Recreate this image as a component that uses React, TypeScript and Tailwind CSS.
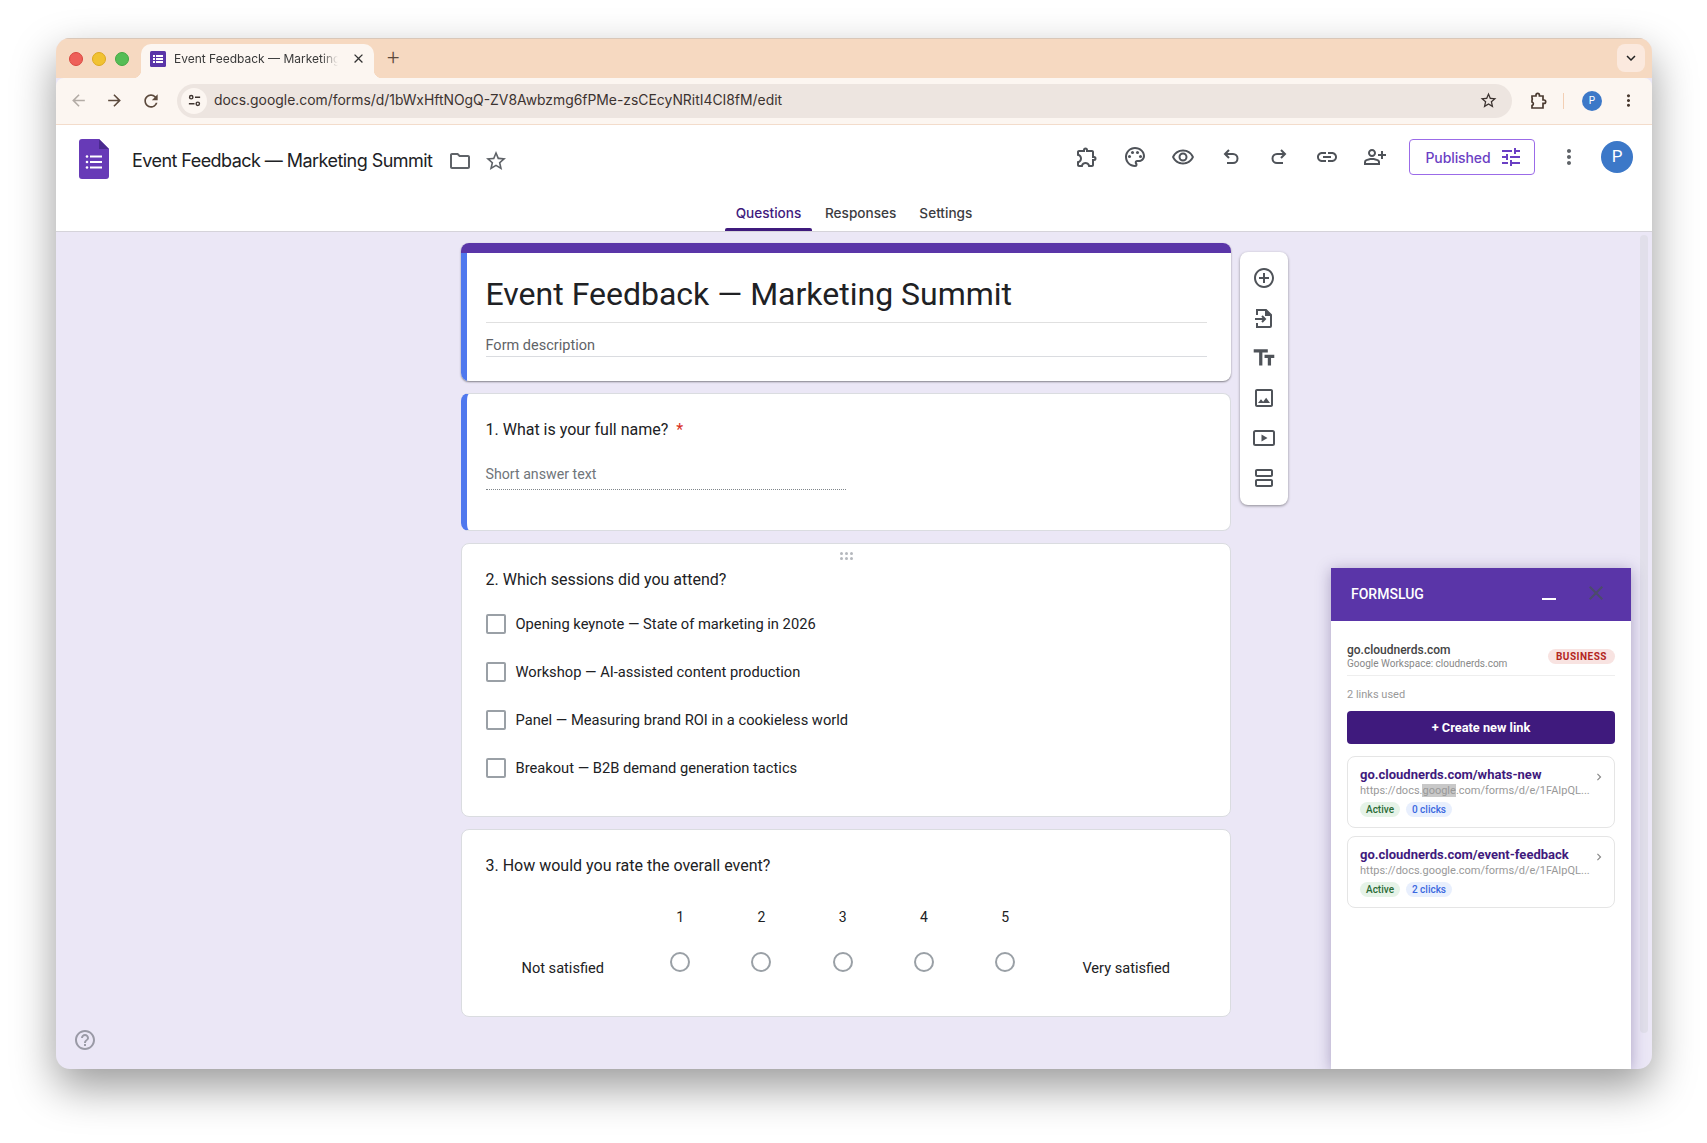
import {
  MdAddCircleOutline,
  MdArrowBack,
  MdArrowForward,
  MdChevronRight,
  MdClose,
  MdExpandMore,
  MdHelpOutline,
  MdLink,
  MdMoreVert,
  MdOutlineExtension,
  MdOutlineFolder,
  MdOutlineImage,
  MdOutlinePalette,
  MdOutlinePersonAddAlt,
  MdOutlineRemoveRedEye,
  MdOutlineViewAgenda,
  MdRefresh,
  MdStarBorder,
  MdTextFields,
  MdTune,
} from "react-icons/md";

const sessions = [
  "Opening keynote — State of marketing in 2026",
  "Workshop — AI-assisted content production",
  "Panel — Measuring brand ROI in a cookieless world",
  "Breakout — B2B demand generation tactics",
];

const links = [
  { slug: "go.cloudnerds.com/whats-new", clicks: "0 clicks", mark: true },
  { slug: "go.cloudnerds.com/event-feedback", clicks: "2 clicks", mark: false },
];

const FormsGlyph = ({ className }: { className: string }) => (
  <svg viewBox="0 0 30 40" className={className}>
    <path d="M3 0h17l10 10v27a3 3 0 0 1-3 3H3a3 3 0 0 1-3-3V3a3 3 0 0 1 3-3z" fill="#673ab7" />
    <path d="M20 0l10 10H20z" fill="#4a2a8f" />
    <g fill="#fff">
      <circle cx="8" cy="17.5" r="1.3" />
      <circle cx="8" cy="23" r="1.3" />
      <circle cx="8" cy="28.5" r="1.3" />
      <rect x="11" y="16.5" width="12" height="2" />
      <rect x="11" y="22" width="12" height="2" />
      <rect x="11" y="27.5" width="12" height="2" />
    </g>
  </svg>
);

const TabFavicon = () => (
  <svg viewBox="0 0 16 16" className="w-[16px] h-[16px] shrink-0">
    <rect width="16" height="16" rx="1.5" fill="#5a35a8" />
    <g fill="#fff">
      <rect x="3" y="4" width="2" height="2" />
      <rect x="3" y="7" width="2" height="2" />
      <rect x="3" y="10" width="2" height="2" />
      <rect x="6" y="4" width="7" height="2" />
      <rect x="6" y="7" width="7" height="2" />
      <rect x="6" y="10" width="7" height="2" />
    </g>
  </svg>
);

const ImportIcon = () => (
  <svg viewBox="0 0 24 24" className="w-6 h-6" fill="none" stroke="#4f5359" strokeWidth="2">
    <path d="M5 9V4h9l5 5v11a1 1 0 0 1-1 1H5v-4" />
    <path d="M14 4v5h5" fill="#4f5359" />
    <path d="M3 13h10M10 10l3 3-3 3" />
  </svg>
);

const VideoIcon = () => (
  <svg viewBox="0 0 24 24" className="w-6 h-6">
    <rect x="2" y="5" width="20" height="14" rx="1.5" fill="none" stroke="#4f5359" strokeWidth="2" />
    <path d="M9.5 8.5v7l6-3.5z" fill="#4f5359" />
  </svg>
);

const UndoIcon = ({ flip }: { flip?: boolean }) => (
  <svg viewBox="0 0 24 24" className={flip ? "w-6 h-6 -scale-x-100" : "w-6 h-6"} fill="none" stroke="currentColor" strokeWidth="2">
    <path d="M10 5L6 9l4 4" />
    <path d="M6 9h8a4.5 4.5 0 0 1 0 9H8" />
  </svg>
);

const ChromePuzzle = () => (
  <svg viewBox="0 0 20 20" className="w-[20px] h-[20px]" fill="none" stroke="#4a3a30" strokeWidth="1.7">
    <path d="M4 5h4V4a1.7 1.7 0 0 1 3.4 0v1h3.6v4h1a1.7 1.7 0 0 1 0 3.4h-1V17H4v-2.5a1.8 1.8 0 0 0 0-3.5V9a1.8 1.8 0 0 0 0-2z" />
  </svg>
);

const HeaderIcon = ({ children }: { children: React.ReactNode }) => (
  <div className="w-12 flex items-center justify-center text-[#4f5359] text-[24px]">{children}</div>
);

const Card = ({ children, className }: { children: React.ReactNode; className: string }) => (
  <div className={"w-[770px] bg-white rounded-[8px] border border-[#dadce0] " + className}>{children}</div>
);

export default function App() {
  return (
    <div className="w-[1707px] h-[1143px] bg-white pt-[38px] pl-[56px] font-['Roboto',sans-serif] overflow-hidden">
      <div className="w-[1596px] h-[1031px] rounded-[14px] overflow-hidden flex flex-col shadow-[0_18px_44px_rgba(0,0,0,0.4)] bg-[#ebe7f6] relative">
        {/* tab strip */}
        <div className="h-[40px] bg-[#f6d9c1] flex items-start shrink-0 border-t border-[#d9c7b8]">
          <div className="flex items-center gap-[9px] pl-[13px] pt-[13px] w-[85px] shrink-0">
            <div className="w-[14px] h-[14px] rounded-full bg-[#ee6059] border border-[#d8473f]" />
            <div className="w-[14px] h-[14px] rounded-full bg-[#f1c232] border border-[#dca81f]" />
            <div className="w-[14px] h-[14px] rounded-full bg-[#55bd55] border border-[#43a843]" />
          </div>
          <div className="relative mt-[5px] h-[34px] w-[233px] bg-[#fcf6f1] rounded-t-[10px] flex items-center pl-[9px] pb-[5px] shrink-0">
            <TabFavicon />
            <span className="ml-[8px] w-[164px] overflow-hidden whitespace-nowrap text-[12px] text-[#3a3a3a] font-['Inter',sans-serif] [mask-image:linear-gradient(90deg,#000_90%,transparent)]">
              Event Feedback — Marketing
            </span>
            <MdClose className="ml-[13px] text-[15px] text-[#333]" />
            <div className="absolute -left-[8px] bottom-0 w-[8px] h-[8px] bg-[radial-gradient(circle_at_0_0,#f6d9c1_8px,#fcf6f1_8.5px)]" />
            <div className="absolute -right-[8px] bottom-0 w-[8px] h-[8px] bg-[radial-gradient(circle_at_100%_0,#f6d9c1_8px,#fcf6f1_8.5px)]" />
          </div>
          <div className="ml-[13px] mt-[8px] text-[22px] leading-[22px] font-light text-[#5c4a3d]">+</div>
          <div className="ml-auto mr-[7px] mt-[5px] w-[28px] h-[28px] rounded-[8px] bg-[#fbe9de] flex items-center justify-center text-[18px] text-[#222]">
            <MdExpandMore />
          </div>
        </div>

        {/* address bar */}
        <div className="h-[47px] bg-[#fcf6f1] flex items-center border-b border-[#f3dccb] shrink-0 pl-[13px] pb-[1px] rounded-t-[8px]">
          <MdArrowBack className="text-[19px] text-[#b3aca6]" />
          <MdArrowForward className="ml-[17px] text-[19px] text-[#5c4a3d]" />
          <MdRefresh className="ml-[17px] text-[20px] text-[#5c4a3d]" />
          <div className="ml-[16px] w-[1335px] h-[34px] rounded-full bg-[#ede5e0] flex items-center pl-[4px] pr-[14px]">
            <div className="w-[26px] h-[26px] rounded-full bg-[#fcf6f1] flex items-center justify-center">
              <svg viewBox="0 0 16 16" className="w-[15px] h-[15px]" fill="none" stroke="#3f3530" strokeWidth="1.5">
                <circle cx="4.5" cy="4.5" r="1.8" />
                <path d="M8.5 4.5H14M2 11.5h6" />
                <circle cx="11.5" cy="11.5" r="1.8" />
              </svg>
            </div>
            <span className="ml-[7px] text-[13.9px] text-[#3c3330] font-['Inter',sans-serif] whitespace-nowrap">
              docs.google.com/forms/d/1bWxHftNOgQ-ZV8Awbzmg6fPMe-zsCEcyNRitI4CI8fM/edit
            </span>
            <MdStarBorder className="ml-auto text-[19px] text-[#3c3330]" />
          </div>
          <div className="ml-[16px]"><ChromePuzzle /></div>
          <div className="ml-[15px] w-px h-[16px] bg-[#f3cfb4]" />
          <div className="ml-[18px] w-[20px] h-[20px] rounded-full bg-[#3c78c8] text-white text-[10px] flex items-center justify-center">P</div>
          <MdMoreVert className="ml-[17px] text-[19px] text-[#4a3a30]" />
        </div>

        {/* forms header */}
        <div className="h-[107px] bg-white border-b border-[#d5d3da] shrink-0 flex flex-col">
          <div className="h-[88px] flex pl-[23px] pr-[19px] pt-[14px]">
            <FormsGlyph className="w-[30px] h-[40px] shrink-0" />
            <span className="ml-[23px] mt-[10px] text-[18px] leading-[24px] text-[#202124] font-['Inter',sans-serif] whitespace-nowrap h-[24px] tracking-[-0.55px]">
              Event Feedback — Marketing Summit
            </span>
            <MdOutlineFolder className="ml-[16px] mt-[10px] text-[24px] text-[#5f6368]" />
            <MdStarBorder className="ml-[12px] mt-[10px] text-[24px] text-[#5f6368]" />
            <div className="ml-auto flex h-[36px] items-center">
              <HeaderIcon><MdOutlineExtension /></HeaderIcon>
              <HeaderIcon><MdOutlinePalette /></HeaderIcon>
              <HeaderIcon><MdOutlineRemoveRedEye /></HeaderIcon>
              <HeaderIcon><UndoIcon /></HeaderIcon>
              <HeaderIcon><UndoIcon flip /></HeaderIcon>
              <HeaderIcon><MdLink /></HeaderIcon>
              <HeaderIcon><MdOutlinePersonAddAlt /></HeaderIcon>
              <div className="ml-[10px] w-[126px] h-[36px] rounded-[4px] border border-[#9b6be8] flex items-center justify-center gap-[8px] pl-[4px] text-[#6b3fc4]">
                <span className="text-[14px] font-medium font-['Inter',sans-serif] tracking-[-0.1px]">Published</span>
                <MdTune className="text-[24px]" />
              </div>
              <MdMoreVert className="ml-[22px] text-[24px] text-[#5f6368]" />
              <div className="ml-[20px] w-[32px] h-[32px] rounded-full bg-[#3c78c8] text-white text-[17px] flex items-center justify-center">P</div>
            </div>
          </div>
          <div className="flex-1 flex pl-[669px] text-[13.6px] font-medium font-['Inter',sans-serif] text-[#3c3c41]">
            <div className="w-[87px] flex flex-col items-center justify-between text-[#3f1a7d]">
              <span className="leading-[18px] -mt-[9px]">Questions</span>
              <div className="w-full h-[3px] bg-[#3f1a7d] rounded-t-[2px]" />
            </div>
            <span className="ml-[13px] leading-[18px] -mt-[9px]">Responses</span>
            <span className="ml-[23px] leading-[18px] -mt-[9px]">Settings</span>
          </div>
        </div>

        {/* form body */}
        <div className="flex-1 relative flex items-start pl-[405px] pt-[11px] gap-[9px] text-[#202124]">
          <div className="flex flex-col gap-[12px]">
            <div className="w-[770px] h-[138px] bg-white rounded-[8px] overflow-hidden shadow-[0_1px_2px_rgba(0,0,0,0.45)] flex flex-col">
              <div className="h-[10px] bg-[#5a35a8] shrink-0" />
              <div className="flex-1 flex">
                <div className="w-[6px] bg-[#4f78ee] shrink-0" />
                <div className="flex-1 pl-[18.5px] pr-[24px] pt-[19px]">
                  <div className="h-[51px] text-[32px] leading-[44px] border-b border-[#e0e0e0]">Event Feedback — Marketing Summit</div>
                  <div className="h-[34px] pt-[12px] text-[14.5px] leading-[22px] text-[#5f6368] border-b border-[#dadce0]">Form description</div>
                </div>
              </div>
            </div>

            <div className="w-[770px] h-[138px] bg-white rounded-[8px] border border-l-[6px] border-[#dadce0] border-l-[#4f78ee] pl-[18.5px] pt-[24px]">
              <div className="text-[16px] leading-[24px]">
                1. What is your full name? <span className="ml-[4px] text-[#d93025]">*</span>
              </div>
              <div className="mt-[22px] w-[360px] h-[26px] text-[14.2px] leading-[20px] text-[#70757a] border-b border-dotted border-[#80868b]">Short answer text</div>
            </div>

            <Card className="relative h-[274px] pl-[23.5px] pt-[24px]">
              <div className="absolute left-[378px] top-[8px] grid grid-cols-3 gap-[2px]">
                {[0, 1, 2, 3, 4, 5].map((d) => (
                  <div key={d} className="w-[3px] h-[3px] rounded-full bg-[#b5b8bd]" />
                ))}
              </div>
              <div className="text-[16px] leading-[24px]">2. Which sessions did you attend?</div>
              <div className="mt-[8px] flex flex-col">
                {sessions.map((s) => (
                  <div key={s} className="h-[48px] flex items-center">
                    <div className="w-[20px] h-[20px] rounded-[2px] border-2 border-[#9aa0a6] shrink-0" />
                    <span className="ml-[10px] text-[14.7px] leading-[22px]">{s}</span>
                  </div>
                ))}
              </div>
            </Card>

            <Card className="h-[188px] pl-[23.5px] pt-[24px]">
              <div className="text-[16px] leading-[24px]">3. How would you rate the overall event?</div>
              <div className="mt-[29px] -ml-[23.5px] grid grid-cols-[177.5px_repeat(5,81.25px)_161px] text-[14px] text-center">
                <div />
                {[1, 2, 3, 4, 5].map((n) => (
                  <div key={n} className="h-[45px]">{n}</div>
                ))}
                <div />
                <div className="pt-[6px] pl-[24px] text-[14.6px]">Not satisfied</div>
                {[1, 2, 3, 4, 5].map((n) => (
                  <div key={n} className="flex justify-center">
                    <div className="w-[20px] h-[20px] rounded-full border-2 border-[#9aa0a6]" />
                  </div>
                ))}
                <div className="pt-[6px] text-[14.6px]">Very satisfied</div>
              </div>
            </Card>
          </div>

          {/* side toolbar */}
          <div className="mt-[9px] w-[48px] h-[253px] bg-white rounded-[8px] shadow-[0_1px_3px_rgba(0,0,0,0.4)] flex flex-col items-center pt-[6px] text-[#4f5359] text-[24px]">
            <div className="h-[40px] flex items-center"><MdAddCircleOutline /></div>
            <div className="h-[40px] flex items-center"><ImportIcon /></div>
            <div className="h-[40px] flex items-center"><MdTextFields className="text-[26px]" /></div>
            <div className="h-[40px] flex items-center"><MdOutlineImage /></div>
            <div className="h-[40px] flex items-center"><VideoIcon /></div>
            <div className="h-[40px] flex items-center"><MdOutlineViewAgenda /></div>
          </div>

          {/* scrollbar */}
          <div className="absolute right-[4px] top-[3px] w-[8px] h-[798px] rounded-full bg-[#e1dfea]" />

          {/* help */}
          <MdHelpOutline className="absolute left-[17px] bottom-[17px] text-[24px] text-[#9a9aa6]" />

          {/* FormSlug panel */}
          <div className="absolute left-[1275px] top-[336px] bottom-0 w-[300px] bg-white shadow-[0_2px_14px_rgba(50,30,100,0.35)]">
            <div className="h-[53px] bg-[#5a35a8] flex items-center pl-[20px] text-white text-[14px] font-medium">
              <span>FORMSLUG</span>
              <div className="ml-[118px] mt-[9px] w-[14px] h-[2px] bg-white" />
              <MdClose className="ml-[28px] -mt-[4px] text-[24px] text-[#4b4b6b]" />
            </div>
            <div className="px-[16px] pt-[22px]">
              <div className="h-[33px] flex items-start justify-between border-b border-[#eeeeee]">
                <div>
                  <div className="text-[12px] leading-[14px] font-medium text-[#444]">go.cloudnerds.com</div>
                  <div className="text-[10px] leading-[13px] text-[#888]">Google Workspace: cloudnerds.com</div>
                </div>
                <div className="h-[15px] w-[67px] mt-[6px] rounded-full bg-[#f8e3e1] text-[#b3261e] text-[10px] leading-[15px] font-bold tracking-[0.5px] text-center">BUSINESS</div>
              </div>
              <div className="mt-[13px] text-[11px] leading-[12px] text-[#999]">2 links used</div>
              <div className="mt-[10px] h-[33px] rounded-[4px] bg-[#3f1a7d] text-white text-[12.8px] font-bold flex items-center justify-center">+ Create new link</div>
              <div className="mt-[12px] flex flex-col gap-[8px]">
                {links.map((l) => (
                  <div key={l.slug} className="relative h-[72px] rounded-[8px] border border-[#e5e5e5] pl-[12px] pt-[10px]">
                    <div className="text-[13px] leading-[16px] font-bold text-[#3f1a7d] whitespace-nowrap">{l.slug}</div>
                    <div className="text-[11px] leading-[15px] text-[#999] whitespace-nowrap">
                      https://docs.{l.mark ? <span className="bg-[#c8c8c8]">google</span> : "google"}.com/forms/d/e/1FAIpQL...
                    </div>
                    <div className="mt-[4px] flex gap-[6px] text-[10px] leading-[15px] font-medium">
                      <span className="w-[40px] text-center rounded-full bg-[#e6f3e8] text-[#2a6b35]">Active</span>
                      <span className="w-[46px] text-center rounded-full bg-[#e8effd] text-[#3b68e0]">{l.clicks}</span>
                    </div>
                    <MdChevronRight className="absolute right-[8px] top-[13px] text-[14px] text-[#888]" />
                  </div>
                ))}
              </div>
            </div>
          </div>
        </div>
      </div>
    </div>
  );
}
